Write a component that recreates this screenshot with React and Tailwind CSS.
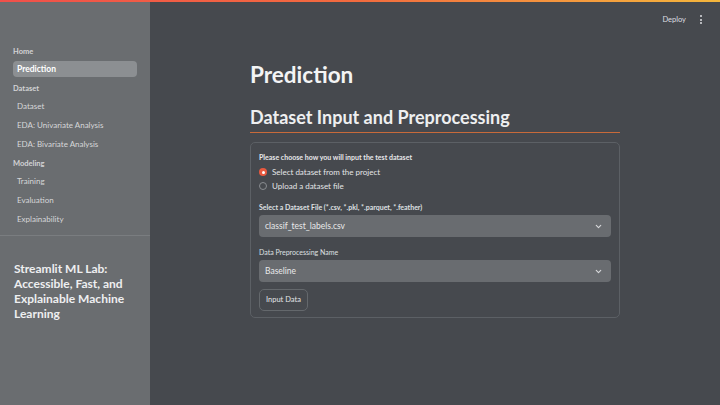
import { ChevronDown } from 'lucide-react';

const font = { fontFamily: 'Lato, "Noto Sans", sans-serif' };

function NavGroup({ title, items, active }) {
  return (
    <div className="mb-[2px]">
      <p className="mb-[2px] h-[14px] px-[13px] text-[7.5px] font-bold leading-[14px] text-[#d2d3d5]">{title}</p>
      {items.map((item) => (
        <div
          key={item}
          className={
            item === active
              ? 'mx-[13px] mb-[3px] flex h-[16px] items-center rounded-[4px] bg-[#8c8f92] px-[4px] text-[8.5px] font-bold text-white'
              : 'mx-[13px] mb-[3px] flex h-[16px] items-center px-[4px] text-[8px] text-[#d6d7d9]'
          }
        >
          {item}
        </div>
      ))}
    </div>
  );
}

function Select({ label, value, bold }) {
  return (
    <div>
      <p className={`mb-[3px] text-[7px] leading-[10px] text-[#dfe0e2] ${bold ? 'font-bold' : ''}`}>{label}</p>
      <div className="flex h-[22px] items-center justify-between rounded-[4px] bg-[#696c70] pl-[6px] pr-[8px] text-[8.5px] text-[#e8e9ea]">
        <span>{value}</span>
        <ChevronDown size={9} strokeWidth={3} className="text-[#d8d9db]" />
      </div>
    </div>
  );
}

export default function App() {
  return (
    <div className="flex h-[405px] w-[720px] flex-col overflow-hidden bg-[#46494e]" style={font}>
      <div className="h-[2px] w-full bg-gradient-to-r from-[#f0504a] via-[#f26b3e] to-[#f4b63c]" />
      <div className="flex flex-1">
        <aside className="flex w-[150px] flex-col bg-[#6a6d70] pt-[43px]">
          <NavGroup title="Home" items={['Prediction']} active="Prediction" />
          <NavGroup
            title="Dataset"
            items={['Dataset', 'EDA: Univariate Analysis', 'EDA: Bivariate Analysis']}
          />
          <NavGroup title="Modeling" items={['Training', 'Evaluation', 'Explainability']} />
          <div className="mt-[3px] border-t border-[#7a7d80]" />
          <h3 className="mt-[25px] px-[14px] text-[12px] font-bold leading-[15px] text-[#eeeff0]">
            Streamlit ML Lab: Accessible, Fast, and Explainable Machine Learning
          </h3>
        </aside>
        <main className="relative flex-1">
          <div className="absolute right-[18px] top-[12px] flex items-center gap-[14px] text-[7.5px] text-[#dcdde0]">
            <span>Deploy</span>
            <span className="flex flex-col gap-[1.5px]">
              <span className="h-[2px] w-[2px] rounded-full bg-[#dcdde0]" />
              <span className="h-[2px] w-[2px] rounded-full bg-[#dcdde0]" />
              <span className="h-[2px] w-[2px] rounded-full bg-[#dcdde0]" />
            </span>
          </div>
          <div className="ml-[100px] mt-[58px] w-[370px]">
            <h1 className="text-[22.5px] font-bold leading-[30px] text-[#f3f4f5]">Prediction</h1>
            <h2 className="mt-[15px] text-[18px] font-bold leading-[24px] text-[#eeeff0]">
              Dataset Input and Preprocessing
            </h2>
            <div className="mt-[3px] h-[1px] bg-[#c86a3a]" />
            <div className="mt-[9px] rounded-[5px] border border-[#5c6065] px-[8px] pb-[6px] pt-[9px]">
              <p className="text-[7px] font-bold leading-[10px] text-[#e6e7e9]">
                Please choose how you will input the test dataset
              </p>
              <div className="mt-[4px] flex h-[12px] items-center gap-[5px] text-[8px] text-[#e4e5e7]">
                <span className="flex h-[8px] w-[8px] items-center justify-center rounded-full bg-[#e8593f]">
                  <span className="h-[3px] w-[3px] rounded-full bg-white" />
                </span>
                Select dataset from the project
              </div>
              <div className="mt-[2px] flex h-[12px] items-center gap-[5px] text-[8px] text-[#e4e5e7]">
                <span className="h-[8px] w-[8px] rounded-full border border-[#8a8d91]" />
                Upload a dataset file
              </div>
              <div className="mt-[10px]">
                <Select label="Select a Dataset File (*.csv, *.pkl, *.parquet, *.feather)" value="classif_test_labels.csv" bold />
              </div>
              <div className="mt-[10px]">
                <Select label="Data Preprocessing Name" value="Baseline" />
              </div>
              <button className="mt-[7px] h-[22px] rounded-[5px] border border-[#64686c] px-[6px] text-[7.5px] text-[#e4e5e7]">
                Input Data
              </button>
            </div>
          </div>
        </main>
      </div>
    </div>
  );
}
